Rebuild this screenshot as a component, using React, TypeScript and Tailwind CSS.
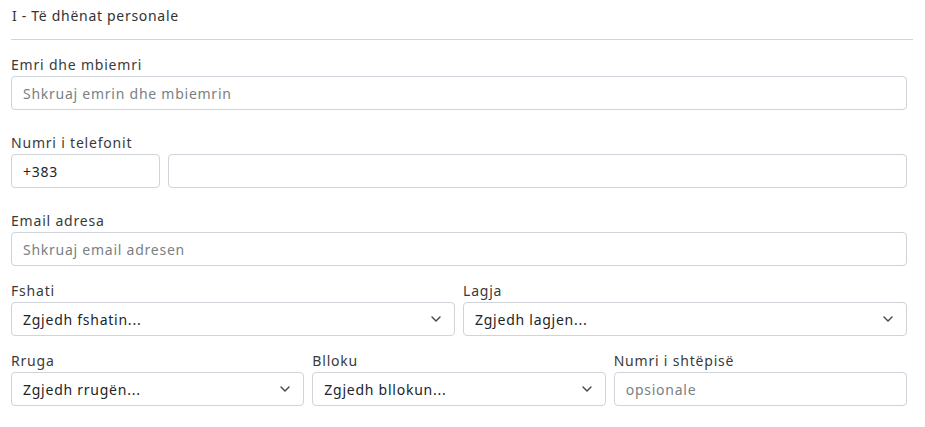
import React from "react";

const font = { fontFamily: "'Noto Sans', 'Open Sans', sans-serif" };

function Label({ children }: { children: React.ReactNode }) {
  return <div className="text-[14px] leading-[20px] tracking-[0.8px] text-[#3a3a3a] mb-[1px]">{children}</div>;
}

function Input({ placeholder, value }: { placeholder?: string; value?: string }) {
  return (
    <input
      className="w-full h-[34px] border border-[#ced4da] rounded-[4px] px-[11px] text-[14px] tracking-[0.75px] text-[#212529] placeholder:text-[#7a7f85] bg-white outline-none"
      placeholder={placeholder}
      defaultValue={value}
    />
  );
}

function Select({ text }: { text: string }) {
  return (
    <div className="w-full h-[34px] border border-[#ced4da] rounded-[4px] pl-[11px] pr-[13px] flex items-center justify-between bg-white">
      <span className="text-[14px] tracking-[0.75px] text-[#212529]">{text}</span>
      <svg width="10" height="6" viewBox="0 0 10 6" fill="none">
        <path d="M1 1 L5 5 L9 1" stroke="#444" strokeWidth="1.4" strokeLinecap="round" strokeLinejoin="round" />
      </svg>
    </div>
  );
}

export default function App() {
  return (
    <div className="w-[925px] h-[427px] bg-white pl-[11px]" style={font}>
      <div className="w-[902px] pl-[1px] pt-[6px] pb-[13px] border-b border-[#d4d4d4] text-[14px] leading-[20px] tracking-[0.7px] text-[#333]">
        I - Të dhënat personale
      </div>
      <div className="w-[896px] pt-[15px]">
        <Label>Emri dhe mbiemri</Label>
        <Input placeholder="Shkruaj emrin dhe mbiemrin" />
        <div className="mt-[23px]">
          <Label>Numri i telefonit</Label>
          <div className="flex gap-[8px]">
            <div className="w-[149px] shrink-0">
              <Input value="+383" />
            </div>
            <Input />
          </div>
        </div>
        <div className="mt-[23px]">
          <Label>Email adresa</Label>
          <Input placeholder="Shkruaj email adresen" />
        </div>
        <div className="mt-[15px] grid grid-cols-2 gap-[8px]">
          <div>
            <Label>Fshati</Label>
            <Select text="Zgjedh fshatin..." />
          </div>
          <div>
            <Label>Lagja</Label>
            <Select text="Zgjedh lagjen..." />
          </div>
        </div>
        <div className="mt-[15px] grid grid-cols-3 gap-[8px]">
          <div>
            <Label>Rruga</Label>
            <Select text="Zgjedh rrugën..." />
          </div>
          <div>
            <Label>Blloku</Label>
            <Select text="Zgjedh bllokun..." />
          </div>
          <div>
            <Label>Numri i shtëpisë</Label>
            <Input placeholder="opsionale" />
          </div>
        </div>
      </div>
    </div>
  );
}
